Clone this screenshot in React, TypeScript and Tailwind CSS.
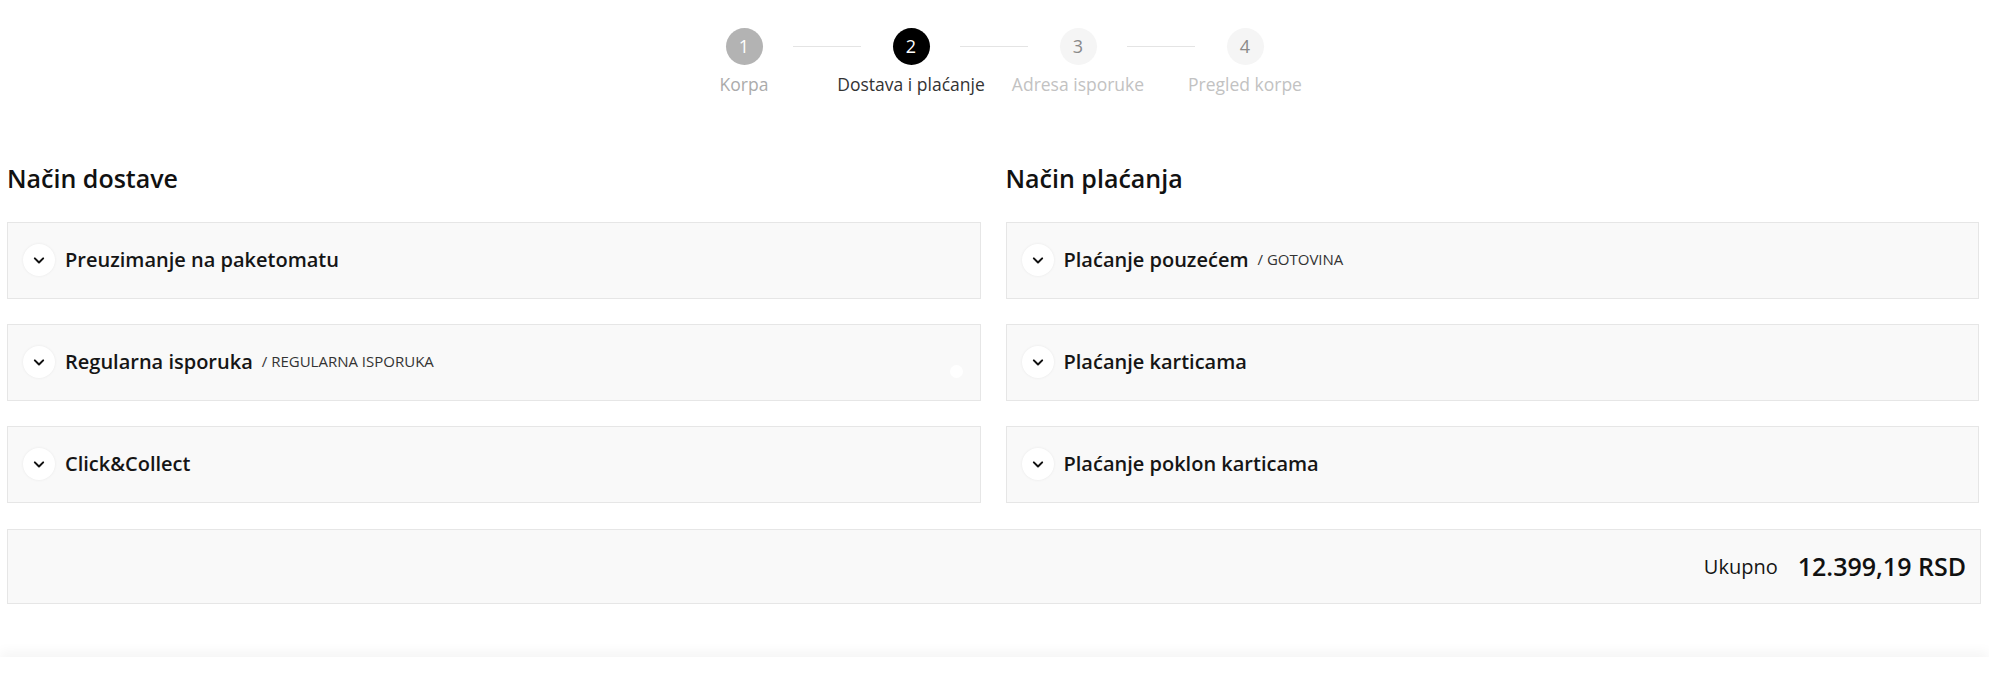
import { useState } from 'react'

type Step = { n: number; label: string; state: 'done' | 'active' | 'todo' }

const steps: Step[] = [
  { n: 1, label: 'Korpa', state: 'done' },
  { n: 2, label: 'Dostava i plaćanje', state: 'active' },
  { n: 3, label: 'Adresa isporuke', state: 'todo' },
  { n: 4, label: 'Pregled korpe', state: 'todo' },
]

const delivery = [
  { id: 'paketomat', title: 'Preuzimanje na paketomatu' },
  { id: 'regular', title: 'Regularna isporuka', sub: 'REGULARNA ISPORUKA', dot: true },
  { id: 'cc', title: 'Click&Collect' },
]

const payment = [
  { id: 'cod', title: 'Plaćanje pouzećem', sub: 'GOTOVINA' },
  { id: 'card', title: 'Plaćanje karticama' },
  { id: 'gift', title: 'Plaćanje poklon karticama' },
]

function Chevron() {
  return (
    <svg width="20" height="20" viewBox="0 0 24 24" fill="none" stroke="#111" strokeWidth="2.4" strokeLinecap="round" strokeLinejoin="round">
      <path d="m7 10 5 5 5-5" />
    </svg>
  )
}

function Option({
  title,
  sub,
  dot,
  open,
  onToggle,
}: {
  title: string
  sub?: string
  dot?: boolean
  open: boolean
  onToggle: () => void
}) {
  return (
    <div className="relative h-[77px] border border-[#e6e6e6] bg-[#f9f9f9] flex items-center pl-[15px] pb-[2px]">
      <button
        type="button"
        onClick={onToggle}
        className={`w-[32px] h-[32px] rounded-full bg-white flex items-center justify-center shadow-[0_0_3px_rgba(0,0,0,0.07)] transition ${open ? 'rotate-180' : ''}`}
      >
        <Chevron />
      </button>
      <span className="ml-[10px] text-[20px] font-semibold text-[#151515]">{title}</span>
      {sub && <span className="ml-[9px] text-[15px] text-[#333]">/ {sub}</span>}
      {dot && (
        <span className="absolute right-[17px] top-[40px] w-[13px] h-[13px] rounded-full bg-white blur-[0.5px]" />
      )}
    </div>
  )
}

export default function App() {
  const [open, setOpen] = useState<string | null>(null)
  const toggle = (id: string) => setOpen(o => (o === id ? null : id))

  return (
    <div className="min-h-[675px] bg-white font-['Open_Sans',sans-serif] text-[#111]">
      {/* stepper */}
      <div className="flex justify-center pt-[28px]">
        {steps.map((s, i) => (
          <div key={s.n} className="relative w-[167px] flex flex-col items-center">
            {i < steps.length - 1 && (
              <div className="absolute top-[18px] left-[calc(50%+49px)] w-[68px] h-px bg-[#e4e4e4]" />
            )}
            <div
              className={`w-[37px] h-[37px] rounded-full flex items-center justify-center text-[18px] ${
                s.state === 'done'
                  ? 'bg-[#b3b3b3] text-white'
                  : s.state === 'active'
                    ? 'bg-black text-white'
                    : 'bg-[#f5f5f5] text-[#8a8a8a]'
              }`}
            >
              {s.n}
            </div>
            <div
              className={`mt-[7px] text-[17.5px] leading-6 whitespace-nowrap ${
                s.state === 'done' ? 'text-[#ababab]' : s.state === 'active' ? 'text-[#333]' : 'text-[#c2c2c2]'
              }`}
            >
              {s.label}
            </div>
          </div>
        ))}
      </div>

      <div className="pl-[7px] pr-[8px] mt-[66px]">
        <div className="grid grid-cols-2 gap-x-[25px] mr-[2px]">
          <div>
            <h2 className="text-[25px] leading-8 font-semibold">Način dostave</h2>
            <div className="mt-[28px] flex flex-col gap-[25px]">
              {delivery.map(d => (
                <Option key={d.id} {...d} open={open === d.id} onToggle={() => toggle(d.id)} />
              ))}
            </div>
          </div>
          <div>
            <h2 className="text-[25px] leading-8 font-semibold">Način plaćanja</h2>
            <div className="mt-[28px] flex flex-col gap-[25px]">
              {payment.map(p => (
                <Option key={p.id} {...p} open={open === p.id} onToggle={() => toggle(p.id)} />
              ))}
            </div>
          </div>
        </div>

        <div className="mt-[26px] h-[75px] border border-[#e6e6e6] bg-[#f9f9f9] flex items-center justify-end pr-[14px]">
          <span className="text-[20px] text-[#151515]">Ukupno</span>
          <span className="ml-[20px] text-[25px] font-semibold text-[#111]">12.399,19 RSD</span>
        </div>
      </div>

      <div className="mt-[53px] h-[18px] bg-white shadow-[0_-6px_12px_rgba(0,0,0,0.04)]" />
    </div>
  )
}
